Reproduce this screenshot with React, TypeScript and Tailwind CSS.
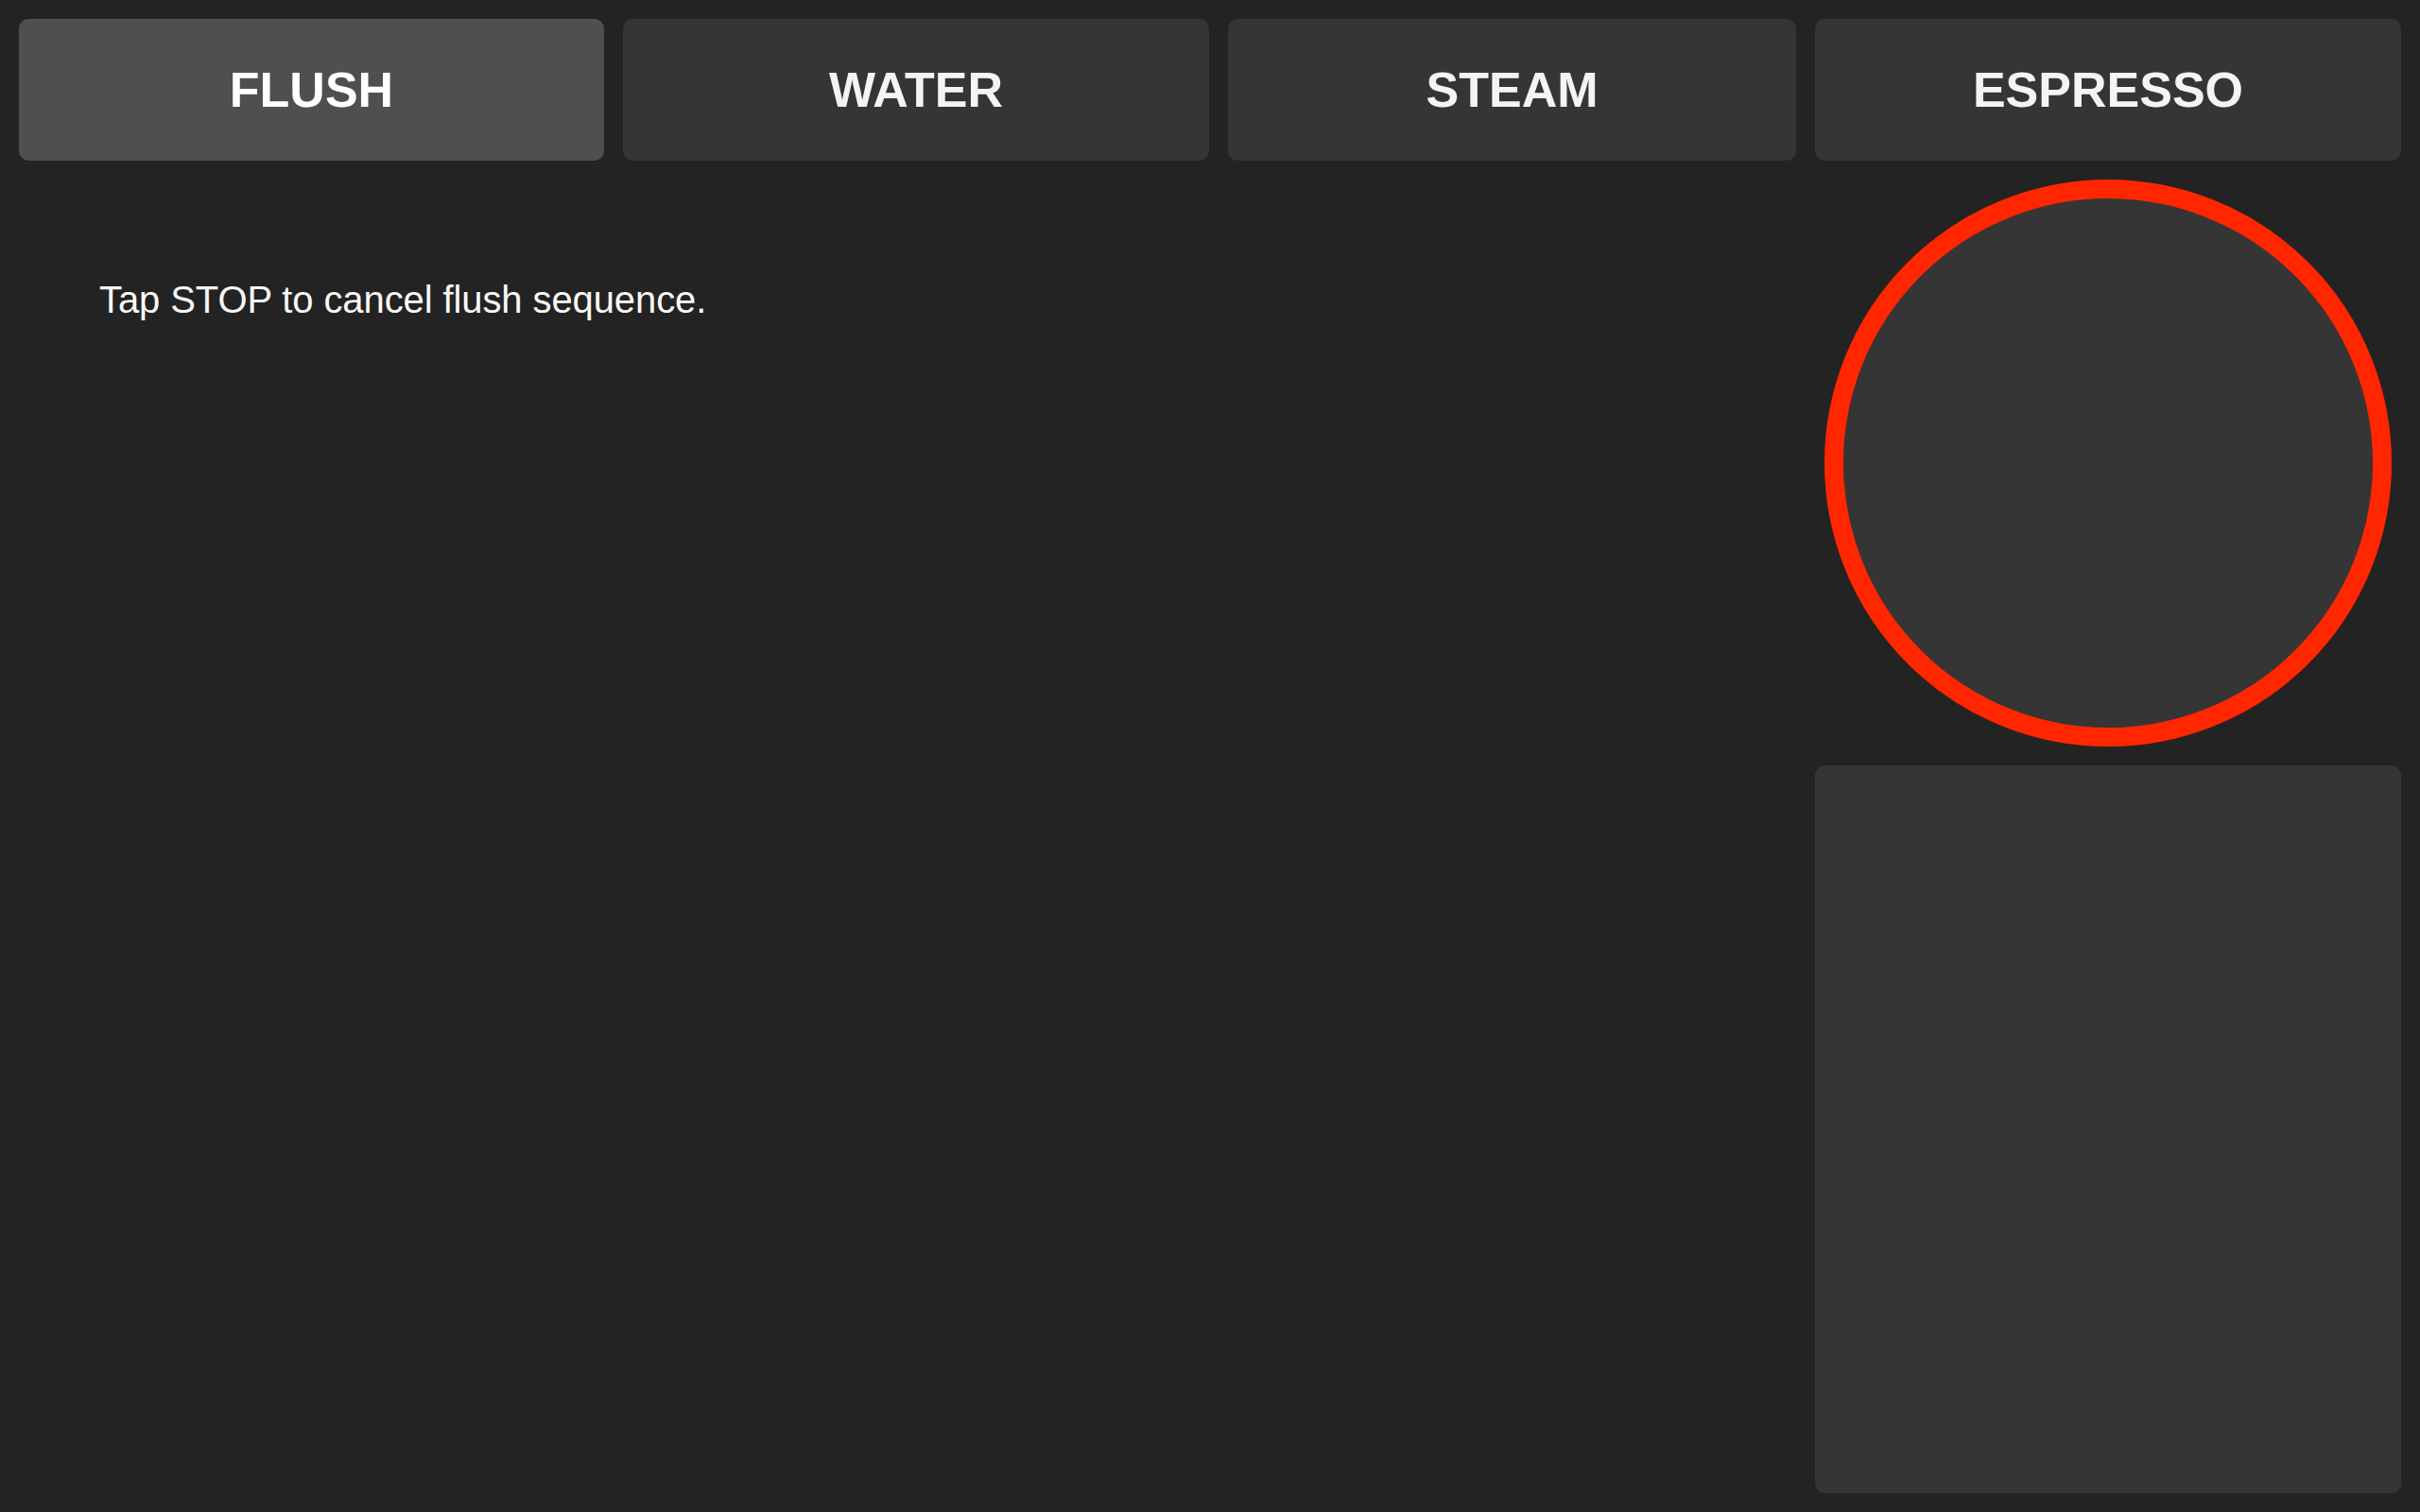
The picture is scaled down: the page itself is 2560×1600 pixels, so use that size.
const tabs = [
  { label: 'FLUSH', width: 'w-[619px]', active: true },
  { label: 'WATER', width: 'w-[620px]', active: false },
  { label: 'STEAM', width: 'w-[601px]', active: false },
  { label: 'ESPRESSO', width: 'w-[620px]', active: false },
];

export default function App() {
  return (
    <div
      className="h-screen w-full bg-[#232323] flex flex-col px-5 pt-5 pb-5 text-white"
      style={{ fontFamily: '"Liberation Sans", Arial, sans-serif' }}
    >
      {/* Mode tabs */}
      <div className="flex gap-5 h-[150px] shrink-0">
        {tabs.map((t) => (
          <button
            key={t.label}
            className={`${t.width} h-full rounded-[10px] flex items-center justify-center font-bold text-[52px] ${
              t.active ? 'bg-[#4f4f4f] text-white' : 'bg-[#353535] text-[#f4f4f4]'
            }`}
          >
            {t.label}
          </button>
        ))}
      </div>

      <div className="flex flex-1 gap-5 pt-5 min-h-0">
        {/* Status area */}
        <div className="flex-1 pl-[85px] pt-[107px]">
          <p className="text-[40px] leading-none text-[#f8f8f8] tracking-[-0.1px]">Tap STOP to cancel flush sequence.</p>
        </div>

        {/* Right column */}
        <div className="w-[620px] flex flex-col gap-5">
          <div className="mx-auto w-[600px] h-[600px] shrink-0 rounded-full border-[20px] border-[#ff2600] bg-[#353535]" />
          <div className="flex-1 rounded-[10px] bg-[#353535]" />
        </div>
      </div>
    </div>
  );
}
